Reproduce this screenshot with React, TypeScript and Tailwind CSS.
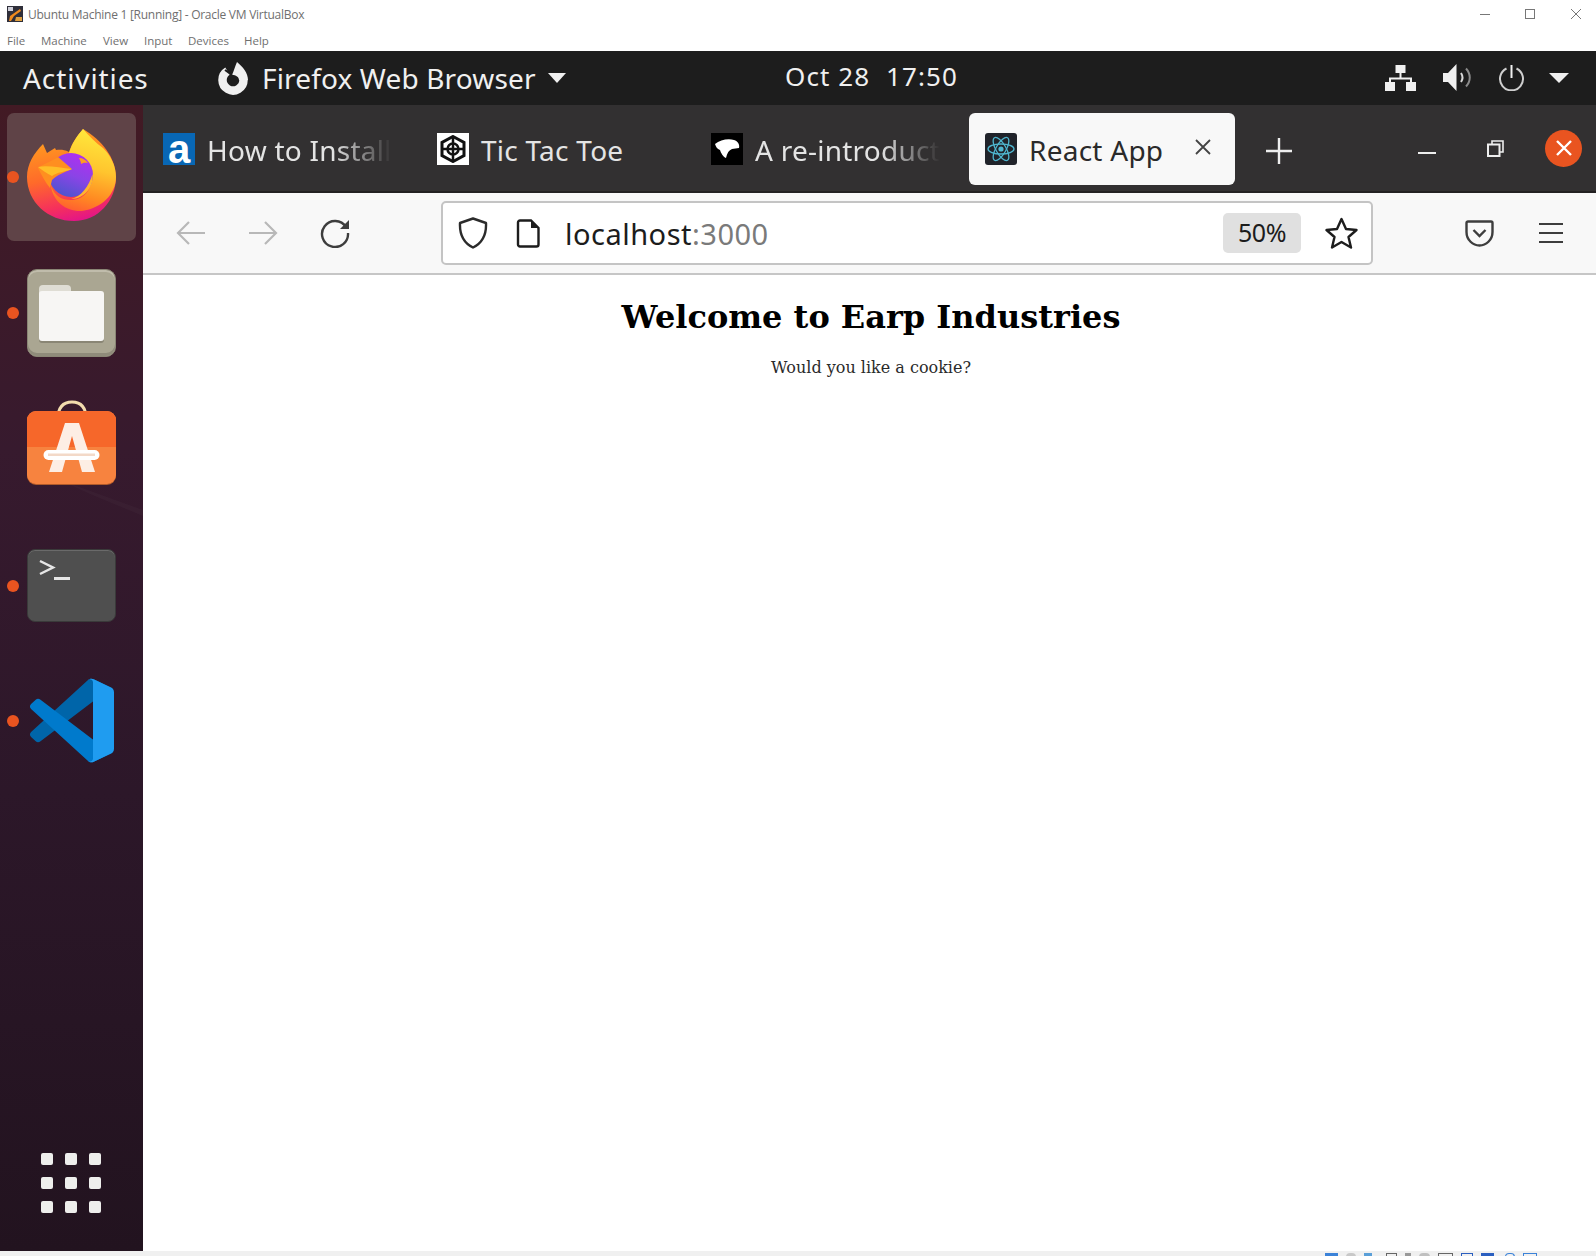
import React from "react";

const ubuntu = "font-['Noto_Sans','Open_Sans',sans-serif]";

function FirefoxLogo() {
  return (
    <svg width="89" height="94" viewBox="0 0 89 94">
      <defs>
        <linearGradient id="ffb" x1="0.35" y1="0.1" x2="0.55" y2="1">
          <stop offset="0" stopColor="#ff9a1f" />
          <stop offset="0.45" stopColor="#ff6a2a" />
          <stop offset="0.8" stopColor="#f5305c" />
          <stop offset="1" stopColor="#e31587" />
        </linearGradient>
        <linearGradient id="ffy" x1="0.55" y1="0" x2="0.35" y2="1">
          <stop offset="0" stopColor="#ffe93c" />
          <stop offset="0.45" stopColor="#ffc52e" />
          <stop offset="0.8" stopColor="#ff8a22" />
          <stop offset="1" stopColor="#ff5f30" />
        </linearGradient>
        <linearGradient id="ffp" x1="0.7" y1="0" x2="0.3" y2="1">
          <stop offset="0" stopColor="#b02ff0" />
          <stop offset="0.5" stopColor="#8a44e6" />
          <stop offset="1" stopColor="#4a55cc" />
        </linearGradient>
      </defs>
      <path d="M56 1C50 8 45 15 42 24C36 21 32 22 29 22L28 20L20 25L16 16C7 25 0 36 0 49C0 74 21 93 47 93C71 93 89 73 89 49C89 30 75 12 56 1Z" fill="url(#ffb)" />
      <path d="M56 1C50 8 45 15 42 25L64 48C66 62 56 72 44 72C34 72 28 68 24 58C26 74 40 84 55 83C75 80 89 66 89 49C89 38 84 28 76 20C69 15 62 8 56 1Z" fill="url(#ffy)" />
      <circle cx="44" cy="47" r="22" fill="url(#ffp)" />
      <path d="M52 30C56 30 59 32 61 35C58 34.500 56 35 54 36C54 34 53 32 52 30Z" fill="#ff9d20" />
      <path d="M65.500 46C67 58 58 71 44 71C54 69 62 58 65.500 46Z" fill="#ffb52e" />
      <path d="M11 40C18 35 25 33 31 29L45 41C38 44 30 47 25 52L23 60C18 54 14 46 11 40Z" fill="#ff8f20" />
      <path d="M11 39C20 37 34 40 45 41C38 44 30 44 25 48C19 45 15 42 11 39Z" fill="#ffbe28" />
    </svg>
  );
}

function VSCode() {
  return (
    <svg width="84" height="85" viewBox="0 0 100 100">
      <path d="M96.4614 10.7962L75.8569 0.875542C73.4719 -0.272773 70.6217 0.211611 68.75 2.08333L1.29858 63.5832C-0.515693 65.2373 -0.513607 68.0937 1.30308 69.7452L6.81272 74.754C8.29793 76.1042 10.5347 76.2036 12.1338 74.9905L93.3609 13.3699C96.086 11.3026 100 13.2462 100 16.6667V16.4275C100 14.0265 98.6246 11.8378 96.4614 10.7962Z" fill="#0065A9" />
      <path d="M96.4614 89.2038L75.8569 99.1245C73.4719 100.273 70.6217 99.7884 68.75 97.9167L1.29858 36.4168C-0.515693 34.7627 -0.513607 31.9063 1.30308 30.2548L6.81272 25.246C8.29793 23.8958 10.5347 23.7964 12.1338 25.0095L93.3609 86.6301C96.086 88.6974 100 86.7538 100 83.3333V83.5725C100 85.9735 98.6246 88.1622 96.4614 89.2038Z" fill="#007ACC" />
      <path d="M75.8578 99.1263C73.4721 100.274 70.6219 99.7885 68.75 97.9166C71.0564 100.223 75 98.5895 75 95.3278V4.67213C75 1.41039 71.0564 -0.223106 68.75 2.08329C70.6219 0.211402 73.4721 -0.273666 75.8578 0.873633L96.4587 10.7807C98.6234 11.8217 100 14.0112 100 16.4132V83.5871C100 85.9891 98.6234 88.1786 96.4587 89.2196L75.8578 99.1263Z" fill="#1F9CF0" />
    </svg>
  );
}

function FilesIcon() {
  return (
    <div className="relative w-[89px] h-[88px] rounded-[10px] bg-[#aaa692] border border-[#8a8675] shadow-[inset_0_-3px_0_#8f8b7a,inset_0_2px_0_#c0bcab]">
      <div className="absolute left-[11px] top-[15px] w-[32px] h-[16px] rounded-t-[4px] bg-[#dfddd4]" />
      <div className="absolute left-[11px] top-[21px] w-[65px] h-[50px] rounded-[3px] bg-[#f7f6f4] shadow-[0_2px_0_#8a8675]" />
    </div>
  );
}

function SoftwareIcon() {
  return (
    <div className="relative w-[89px] h-[84px]">
      <svg className="absolute left-[28px] top-0" width="34" height="20" viewBox="0 0 34 20">
        <path d="M3 19C3 7 8 2 17 2C26 2 31 7 31 19" fill="none" stroke="#f3dcae" strokeWidth="3" />
      </svg>
      <div className="absolute left-0 top-[11px] w-[89px] h-[73px] rounded-[9px] overflow-hidden bg-[#f7833f] shadow-[0_1px_0_#b05a2a]">
        <div className="h-[36px] bg-[#f6672a]" />
      </div>
      <svg className="absolute left-[16px] top-[22px]" width="58" height="52" viewBox="0 0 58 52">
        <path d="M22 1H36L52 50H39L29 14L19 50H6Z" fill="#fdeee4" />
        <rect x="0.5" y="28" width="56" height="10" rx="5" fill="#fff" />
        <rect x="5" y="31.5" width="47" height="2.5" fill="#f3d9c8" />
      </svg>
    </div>
  );
}

function TerminalIcon() {
  return (
    <div className="relative w-[89px] h-[73px] rounded-[8px] bg-[#4f4f4f] border border-[#3a3a3a] shadow-[inset_0_1px_0_#6a6a6a]">
      <svg className="absolute left-[11px] top-[9px]" width="32" height="24" viewBox="0 0 32 24">
        <path d="M1 2L14 8.5L1 15" fill="none" stroke="#e6e6e6" strokeWidth="2.5" />
        <rect x="15" y="18" width="16" height="3" fill="#e6e6e6" />
      </svg>
    </div>
  );
}

function Dock({ dot, children, className }: { dot?: boolean; children: React.ReactNode; className?: string }) {
  return (
    <div className={`relative w-[143px] flex justify-center ${className ?? ""}`}>
      {dot && <span className="absolute left-[7px] top-1/2 -translate-y-1/2 w-[12px] h-[12px] rounded-full bg-[#e95420]" />}
      {children}
    </div>
  );
}

function Sidebar() {
  return (
    <aside className="relative w-[143px] shrink-0 flex flex-col bg-[linear-gradient(180deg,#421a24_0%,#371a2e_30%,#2c1729_60%,#22131f_100%)]">
      <svg className="absolute left-0 top-[375px]" width="143" height="50" viewBox="0 0 143 50">
        <path d="M60 0L143 30V36L90 14Z" fill="#ffffff" opacity="0.025" />
      </svg>
      <div className="relative mt-[8px] mx-[7px] w-[129px] h-[128px] rounded-[7px] bg-[#5f4347] flex items-center justify-center">
        <span className="absolute left-0 top-[58px] w-[12px] h-[12px] rounded-full bg-[#e95420]" />
        <span className="-mt-[4px]"><FirefoxLogo /></span>
      </div>
      <Dock dot className="mt-[28px]"><FilesIcon /></Dock>
      <Dock className="mt-[43px]"><SoftwareIcon /></Dock>
      <Dock dot className="mt-[65px]"><TerminalIcon /></Dock>
      <Dock dot className="mt-[56px]"><VSCode /></Dock>
      <div className="mt-auto mb-[38px] ml-[41px] grid grid-cols-3 gap-[12px] w-[60px]">
        {Array.from({ length: 9 }).map((_, i) => (
          <span key={i} className="w-[12px] h-[12px] rounded-[2px] bg-[#eeeeec]" />
        ))}
      </div>
    </aside>
  );
}

function TopBar() {
  return (
    <div className={`h-[54px] shrink-0 bg-[#1d1d1d] flex items-center text-[#f0f0f0] ${ubuntu}`}>
      <span className="ml-[23px] w-[194px] text-[28px] leading-none tracking-[0.9px]">Activities</span>
      <svg width="33" height="34" viewBox="0 0 33 34" className="-mt-[1px]">
        <path d="M10.500 10.050A10.500 10.500 0 1 0 26.500 19" fill="none" stroke="#f0f0f0" strokeWidth="8.500" />
        <path d="M20 1C26 6 31 12 31 19L22 19C22 16 19 14 15 14C17 10 18 5 20 1Z" fill="#f0f0f0" />
        <path d="M8 9L15 14" stroke="#1d1d1d" strokeWidth="2" />
      </svg>
      <span className="ml-[12px] w-[286px] text-[28px] leading-none tracking-[0.15px] whitespace-nowrap">Firefox Web Browser</span>
      <svg width="18" height="10" viewBox="0 0 18 10"><path d="M0 0H18L9 10Z" fill="#f0f0f0" /></svg>
      <span className="ml-[219px] -mt-[4px] w-[180px] text-[26px] leading-none whitespace-pre tracking-[1.1px]">Oct 28  17:50</span>
      <div className="ml-auto flex items-center -mt-[1px]">
        <svg width="31" height="26" viewBox="0 0 31 26">
          <rect x="10.500" y="0" width="10" height="8" fill="#f0f0f0" />
          <path d="M15.500 8V14M5 18V13.500H26V18" fill="none" stroke="#f0f0f0" strokeWidth="2" />
          <rect x="0" y="17" width="10" height="9" fill="#f0f0f0" />
          <rect x="21" y="17" width="10" height="9" fill="#f0f0f0" />
        </svg>
        <svg width="29" height="27" viewBox="0 0 29 27" className="ml-[27px]">
          <path d="M0 9H5L13.500 0V27L5 18H0Z" fill="#f0f0f0" />
          <path d="M18 9C20 12 20 15 18 18" fill="none" stroke="#d8d8d8" strokeWidth="2" />
          <path d="M23 4.500C28 10 28 17 23 22.500" fill="none" stroke="#8a8a8a" strokeWidth="2" />
        </svg>
        <svg width="27" height="26" viewBox="0 0 27 26" className="ml-[26px]">
          <path d="M8.500 3.500A11.500 11.500 0 1 0 18.500 3.500" fill="none" stroke="#cfcfcf" strokeWidth="2" />
          <path d="M13.500 0V13" stroke="#f0f0f0" strokeWidth="2" />
        </svg>
        <svg width="20" height="10" viewBox="0 0 20 10" className="ml-[24px] mr-[27px]"><path d="M0 0H20L10 10Z" fill="#f0f0f0" /></svg>
      </div>
    </div>
  );
}

function FaviconA() {
  return (
    <span className="w-[32px] h-[32px] shrink-0 bg-[#0867b5] flex items-center justify-center text-white font-['Liberation_Sans',sans-serif] font-bold text-[40px] leading-[28px]">a</span>
  );
}
function FaviconTarget() {
  return (
    <span className="w-[32px] h-[32px] shrink-0 bg-white flex items-center justify-center">
      <svg width="28" height="28" viewBox="0 0 28 28">
        <path d="M14 1.500L25 7.500V20.500L14 26.500L3 20.500V7.500Z" fill="none" stroke="#111" strokeWidth="3" />
        <circle cx="14" cy="14" r="5.500" fill="none" stroke="#111" strokeWidth="2.500" />
        <path d="M14 2V27M3 14H25" stroke="#111" strokeWidth="2.500" />
      </svg>
    </span>
  );
}
function FaviconBlob() {
  return (
    <span className="w-[32px] h-[32px] shrink-0 bg-black flex items-center justify-center">
      <svg width="26" height="22" viewBox="0 0 26 22">
        <path d="M1 6C6 2 14 0 20 2C24 3 26 7 25 10L18 11C15 12 13 15 12 20C9 19 7 15 6 12C3 11 2 9 1 6Z" fill="#fff" />
      </svg>
    </span>
  );
}
function FaviconReact() {
  return (
    <span className="w-[32px] h-[32px] shrink-0 rounded-[3px] bg-[#20232a] flex items-center justify-center">
      <svg width="30" height="30" viewBox="-15 -15 30 30" fill="none" stroke="#4fb6cf" strokeWidth="1.3">
        <ellipse rx="13" ry="5" />
        <ellipse rx="13" ry="5" transform="rotate(60)" />
        <ellipse rx="13" ry="5" transform="rotate(120)" />
        <circle r="2.6" fill="#4fb6cf" stroke="none" />
      </svg>
    </span>
  );
}

function Tab({ icon, label, fade }: { icon: React.ReactNode; label: string; fade?: boolean }) {
  return (
    <div className="w-[274px] h-[72px] shrink-0 pl-[16px] flex items-center">
      {icon}
      <span className={`ml-[12px] mt-[1px] whitespace-nowrap text-[28px] leading-none tracking-[0.25px] text-[#e4e4e4] ${fade ? "[mask-image:linear-gradient(to_right,black_68%,transparent_100%)]" : ""}`}>{label}</span>
    </div>
  );
}

function TabBar() {
  return (
    <div className={`h-[88px] shrink-0 bg-[#323031] border-b-2 border-[#232122] flex items-start pt-[8px] pl-[4px] ${ubuntu}`}>
      <Tab icon={<FaviconA />} label="How to Install" fade />
      <Tab icon={<FaviconTarget />} label="Tic Tac Toe" />
      <Tab icon={<FaviconBlob />} label="A re-introduct" fade />
      <div className="w-[266px] h-[72px] shrink-0 rounded-[6px] bg-[#f8f8f8] pl-[16px] flex items-center text-[#2a2a2a]">
        <FaviconReact />
        <span className="ml-[12px] mt-[1px] w-[166px] text-[28px] leading-none tracking-[0.25px] whitespace-nowrap">React App</span>
        <svg width="16" height="16" viewBox="0 0 16 16" className="-mt-[4px]">
          <path d="M1 1L15 15M15 1L1 15" stroke="#444" strokeWidth="1.8" />
        </svg>
      </div>
      <svg width="28" height="28" viewBox="0 0 28 28" className="ml-[30px] mt-[24px]">
        <path d="M14 1V27M1 14H27" stroke="#eeeeee" strokeWidth="2.4" />
      </svg>
      <div className="ml-auto mr-[14px] flex items-center h-[72px]">
        <span className="w-[18px] h-[2.5px] bg-[#eeeeee] mt-[8px]" />
        <svg width="17" height="17" viewBox="0 0 17 17" className="ml-[51px] -mt-[2px]">
          <path d="M5 4V1H16V12H13" fill="none" stroke="#eeeeee" strokeWidth="1.6" />
          <rect x="1" y="4.5" width="11.5" height="11.5" fill="none" stroke="#eeeeee" strokeWidth="2" />
        </svg>
        <span className="ml-[41px] w-[37px] h-[37px] rounded-full bg-[#e95420] flex items-center justify-center -mt-[2px]">
          <svg width="18" height="18" viewBox="0 0 18 18"><path d="M2 2L16 16M16 2L2 16" stroke="#fff" strokeWidth="2.4" /></svg>
        </span>
      </div>
    </div>
  );
}

function NavBar() {
  return (
    <div className={`h-[82px] shrink-0 bg-[#f8f8f8] border-b-2 border-[#c6c6c6] flex items-center ${ubuntu}`}>
      <svg width="30" height="26" viewBox="0 0 30 26" className="ml-[33px]">
        <path d="M29 13H2M13 2L2 13L13 24" fill="none" stroke="#b8b8b8" strokeWidth="2.2" />
      </svg>
      <svg width="30" height="26" viewBox="0 0 30 26" className="ml-[42px]">
        <path d="M1 13H28M17 2L28 13L17 24" fill="none" stroke="#b8b8b8" strokeWidth="2.2" />
      </svg>
      <svg width="30" height="30" viewBox="0 0 30 30" className="ml-[42px]">
        <path d="M26 9A13 13 0 1 0 28 15" fill="none" stroke="#3d3d3d" strokeWidth="2.4" />
        <path d="M20 11L29 2V11Z" fill="#3d3d3d" />
      </svg>
      <div className="ml-[91px] w-[932px] h-[64px] rounded-[5px] border-2 border-[#c4c4c4] bg-white flex items-center">
        <svg width="30" height="32" viewBox="0 0 30 32" className="ml-[15px]">
          <path d="M15 1.5L28 6C28.5 17 24 26 15 30.5C6 26 1.500 17 2 6Z" fill="none" stroke="#2b2b2b" strokeWidth="2.4" strokeLinejoin="round" />
        </svg>
        <svg width="24" height="29" viewBox="0 0 24 29" className="ml-[28px]">
          <path d="M2 3.500A2 2 0 0 1 4 1.500H15L22.500 9V25.500A2 2 0 0 1 20.500 27.500H4A2 2 0 0 1 2 25.500Z" fill="none" stroke="#1d1d1d" strokeWidth="2.4" />
          <path d="M15 1.500V9H22.500" fill="#1d1d1d" />
        </svg>
        <span className="ml-[25px] text-[29px] leading-none text-[#1c1c1c] tracking-[0.5px]">localhost<span className="text-[#7a7a7a]">:3000</span></span>
        <span className="ml-auto w-[78px] h-[40px] rounded-[5px] bg-[#e0e0e0] flex items-center justify-center text-[25px] tracking-[-0.5px] text-[#1c1c1c]">50%</span>
        <svg width="33" height="32" viewBox="0 0 33 32" className="ml-[24px] mr-[13px]">
          <path d="M16.5 2L21 12L31.500 13L23.500 20L26 30.500L16.500 25L7 30.500L9.500 20L1.500 13L12 12Z" fill="none" stroke="#1d1d1d" strokeWidth="2.4" strokeLinejoin="round" />
        </svg>
      </div>
      <svg width="29" height="27" viewBox="0 0 29 27" className="ml-[92px]">
        <path d="M3 1.500H26A1.500 1.500 0 0 1 27.500 3V12C27.500 20 21 25.500 14.500 25.500C8 25.500 1.500 20 1.500 12V3A1.500 1.500 0 0 1 3 1.500Z" fill="none" stroke="#3d3d3d" strokeWidth="2.4" />
        <path d="M8.500 10L14.500 16L20.500 10" fill="none" stroke="#3d3d3d" strokeWidth="2.4" />
      </svg>
      <div className="ml-[45px] w-[24px] flex flex-col gap-[6.5px]">
        <span className="h-[2.5px] bg-[#3d3d3d]" />
        <span className="h-[2.5px] bg-[#3d3d3d]" />
        <span className="h-[2.5px] bg-[#3d3d3d]" />
      </div>
    </div>
  );
}

export default function App() {
  return (
    <div className="w-[1596px] h-[1256px] flex flex-col bg-white overflow-hidden">
      <div className="h-[28px] shrink-0 flex items-center pl-[7px] pr-[15px] text-[12px] text-[#6f6f6f] font-['Open_Sans',sans-serif]">
        <svg width="16" height="16" viewBox="0 0 16 16">
          <rect width="16" height="16" fill="#2f2f3a" />
          <rect x="1" y="1" width="5" height="4" fill="#cfcfd8" />
          <path d="M3 10L13 3L14 5L7 10L4 15H2Z" fill="#f08a1d" />
          <path d="M9 11H15V15H8Z" fill="#e0a040" />
        </svg>
        <span className="ml-[5px] mt-[1px] tracking-[-0.26px]">Ubuntu Machine 1 [Running] - Oracle VM VirtualBox</span>
        <div className="ml-auto flex items-center">
          <span className="w-[10px] h-[1px] bg-[#777]" />
          <span className="ml-[35px] w-[10px] h-[10px] border border-[#777]" />
          <svg width="10" height="10" viewBox="0 0 10 10" className="ml-[36px]"><path d="M0 0L10 10M10 0L0 10" stroke="#777" strokeWidth="1" /></svg>
        </div>
      </div>
      <div className="h-[23px] shrink-0 flex items-center pl-[7px] pt-[2px] text-[11.5px] text-[#6f6f6f] font-['Open_Sans',sans-serif]">
        <span className="w-[34px]">File</span>
        <span className="w-[62px]">Machine</span>
        <span className="w-[41px]">View</span>
        <span className="w-[44px]">Input</span>
        <span className="w-[56px]">Devices</span>
        <span>Help</span>
      </div>
      <TopBar />
      <div className="flex-1 flex min-h-0">
        <Sidebar />
        <main className="flex-1 flex flex-col min-w-0">
          <TabBar />
          <NavBar />
          <div className="flex-1 flex flex-col items-center pl-[3px] font-['DejaVu_Serif',serif] text-black">
            <h1 className="mt-[20px] text-[32px] leading-[44px] font-bold">Welcome to Earp Industries</h1>
            <p className="mt-[18px] text-[16px] leading-[22px] text-[#2a2a2a]">Would you like a cookie?</p>
          </div>
        </main>
      </div>
      <div className="relative h-[5px] shrink-0 bg-[#f0f0f0] overflow-hidden">
        <div className="absolute left-[1325px] top-[2px] flex gap-[8px]">
          <span className="w-[13px] h-[4px] bg-[#3b82d8]" />
          <span className="w-[10px] h-[4px] rounded-t-full bg-[#c8c8c8]" />
          <span className="w-[8px] h-[4px] bg-[#5a9fd8]" />
          <span className="ml-[6px] w-[11px] h-[4px] border border-[#666]" />
          <span className="w-[6px] h-[4px] bg-[#999]" />
          <span className="w-[11px] h-[4px] rounded-t bg-[#c0c0c0]" />
          <span className="w-[15px] h-[4px] border border-[#666]" />
          <span className="w-[12px] h-[4px] border border-[#2b5fc0]" />
          <span className="w-[13px] h-[4px] bg-[#2b5fc0]" />
          <span className="ml-[3px] w-[10px] h-[4px] rounded-t-full border border-[#3b82d8]" />
          <span className="w-[14px] h-[4px] border border-[#3b82d8]" />
        </div>
      </div>
    </div>
  );
}
